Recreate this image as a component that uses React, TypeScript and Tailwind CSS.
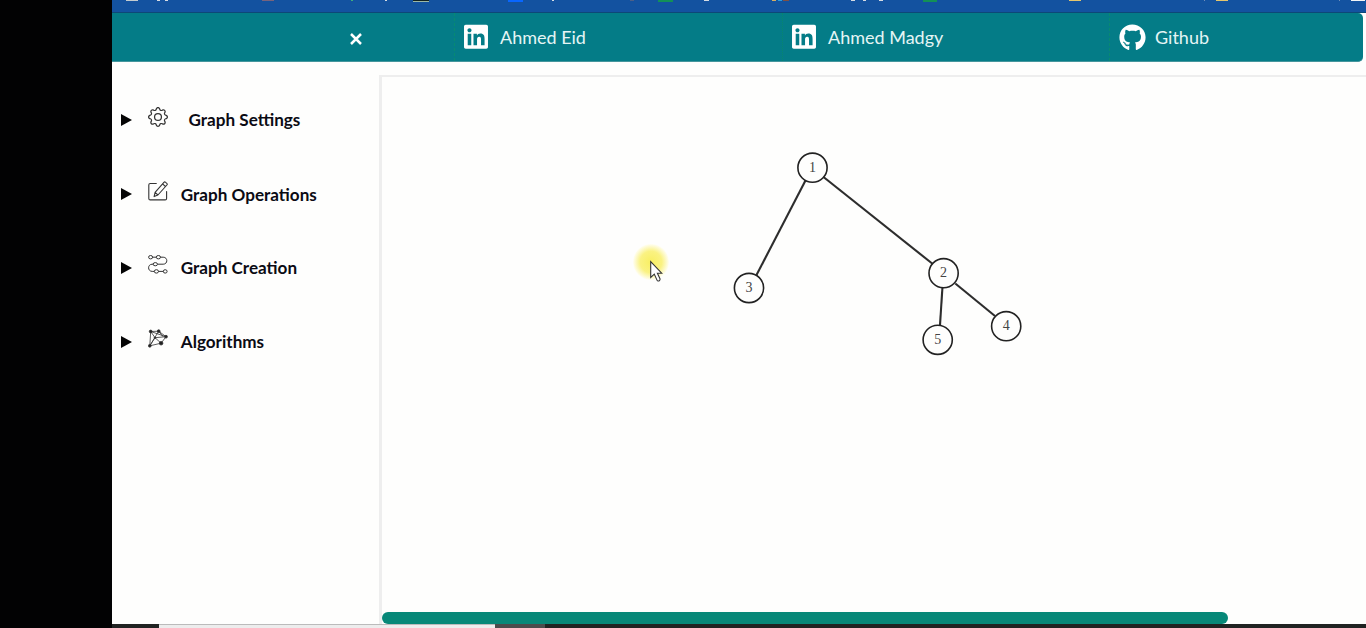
import type { ReactNode } from "react";
import { BsGear } from "react-icons/bs";
import { FaGithub, FaLinkedin } from "react-icons/fa";

const tabMarks = [
  { x: 14, w: 12, c: "#c3ccd0" },
  { x: 45, w: 3, c: "#d5dce4" },
  { x: 53, w: 3, c: "#d5dce4" },
  { x: 150, w: 12, c: "#77637d" },
  { x: 239, w: 2, c: "#3fae7c" },
  { x: 273, w: 2, c: "#d5dce4" },
  { x: 301, w: 16, c: "#10201f" },
  { x: 396, w: 15, c: "#0866ff" },
  { x: 440, w: 2, c: "#d5dce4" },
  { x: 518, w: 4, c: "#4c5f88" },
  { x: 546, w: 15, c: "#139057" },
  { x: 592, w: 5, c: "#d5dce4" },
  { x: 660, w: 4, c: "#d7ad62" },
  { x: 666, w: 4, c: "#289ee0" },
  { x: 671, w: 6, c: "#7d5046" },
  { x: 739, w: 4, c: "#d5dce4" },
  { x: 751, w: 3, c: "#d5dce4" },
  { x: 767, w: 4, c: "#d5dce4" },
  { x: 811, w: 14, c: "#139057" },
  { x: 957, w: 12, c: "#e5c66d" },
  { x: 1092, w: 1, c: "#718fba" },
  { x: 1104, w: 12, c: "#e5c66d" },
  { x: 1227, w: 1, c: "#718fba" },
  { x: 1239, w: 14, c: "#f2f4f6" },
];

function TabStrip() {
  return (
    <svg className="block h-[13px] w-full shrink-0 bg-[#1352a0]" viewBox="0 0 1254 13" shapeRendering="crispEdges">
      {tabMarks.map((m) => (
        <rect key={m.x} x={m.x} y="0" width={m.w} height="1" fill={m.c} />
      ))}
      <rect x="301" y="1" width="16" height="1" fill="#9ab8a6" />
      <rect x="396" y="1" width="15" height="1" fill="#0866ff" />
      <rect x="546" y="1" width="15" height="1" fill="#139057" />
      <rect x="811" y="1" width="14" height="1" fill="#139057" />
      <rect x="0" y="12" width="1254" height="1" fill="#0d4877" />
    </svg>
  );
}

function EditIcon() {
  return (
    <svg className="size-5" viewBox="0 0 20 20" fill="none" stroke="#333" strokeWidth="1.1" strokeLinejoin="round" strokeLinecap="round">
      <path d="M8.3 2.5H2.2Q.8 2.5.8 3.9v13.6q0 1.4 1.4 1.4h15q1.4 0 1.4-1.4v-7" />
      <path d="M15.9 1.3q.8-.8 1.7 0l1.2 1q.9.8.1 1.7l-9 10-3.8 1.6 1-4.2zM14.5 2.9l3 2.6M7.1 11.4l2.8 2.6" />
    </svg>
  );
}

function PathIcon() {
  return (
    <svg className="size-5" viewBox="0 0 20 20" fill="none" stroke="#333" strokeWidth="1">
      <path d="M4.5 2.2h3.7M12.4 2.2h2.8c4.8 0 4.8 7 0 7H9.7M5.4 9.2H4.2c-4.8 0-4.8 7.2 0 7.2h2.1M10.5 16.4h4.9" />
      <ellipse cx="2.6" cy="2.2" rx="2" ry="1.7" />
      <ellipse cx="10.4" cy="2.2" rx="2.1" ry="1.7" />
      <ellipse cx="7.3" cy="9.2" rx="2.2" ry="1.6" />
      <ellipse cx="8.4" cy="16.4" rx="2.1" ry="1.7" />
      <ellipse cx="17.2" cy="16.4" rx="1.9" ry="1.7" />
    </svg>
  );
}

function NetworkIcon() {
  return (
    <svg className="size-5" viewBox="0 0 20 20" fill="#222" stroke="#333" strokeWidth=".8">
      <path fill="none" d="M2.7 2.5 10.7 2.2 18 7.7 13.1 14.2 1.8 16.8 2.7 2.5 7 8.7 18 7.7 2.7 2.5M10.7 2.2 1.8 16.8 7 8.7 13.1 14.2M10.7 2.2 15 7.7" />
      <circle cx="2.7" cy="2.5" r="1.4" />
      <circle cx="10.7" cy="2.2" r="1.4" />
      <circle cx="18" cy="7.7" r="1.4" />
      <circle cx="13.1" cy="14.2" r="1.8" />
      <circle cx="1.8" cy="16.8" r="1.4" />
      <circle cx="7" cy="8.7" r=".8" />
    </svg>
  );
}

function MenuItem({ icon, label, className }: { icon: ReactNode; label: string; className: string }) {
  return (
    <div className="flex h-6 items-center">
      <svg className="h-3 w-[11px] shrink-0" viewBox="0 0 11 12">
        <path d="M0 0 11 6 0 12Z" fill="#050505" />
      </svg>
      <span className="-mt-[7px] ml-[16.4px] shrink-0">{icon}</span>
      <span className={`whitespace-nowrap text-[17.1px] leading-6 font-bold text-[#0b0b14] ${className}`}>{label}</span>
    </div>
  );
}

const nodes = [
  { id: 1, x: 812.5, y: 167.7 },
  { id: 2, x: 943.6, y: 273.2 },
  { id: 3, x: 749, y: 288 },
  { id: 4, x: 1006.2, y: 326.2 },
  { id: 5, x: 937.7, y: 339.8 },
];

const edges = [
  { from: 1, to: 3, d: "M805.5 180.5 756.5 275" },
  { from: 1, to: 2, d: "M823.8 177.2 932.5 263.8" },
  { from: 2, to: 5, d: "M942.4 288 940 325" },
  { from: 2, to: 4, d: "M955.3 283.5 995 316" },
];

function GraphCanvas() {
  return (
    <svg className="block h-[535px] w-full" viewBox="382 77 984 535">
      <defs>
        <radialGradient id="glow">
          <stop offset="0" stopColor="#f8ef62" />
          <stop offset=".6" stopColor="#faf282" />
          <stop offset="1" stopColor="#fffef4" />
        </radialGradient>
      </defs>
      {edges.map((e) => (
        <path key={`${e.from}-${e.to}`} d={e.d} stroke="#2d2d2d" strokeWidth="2.1" />
      ))}
      {nodes.map((n) => (
        <g key={n.id}>
          <circle cx={n.x} cy={n.y} r="14.6" fill="#fefefd" stroke="#222" strokeWidth="1.6" />
          <text x={n.x} y={n.y + 3.8} textAnchor="middle" fontSize="14" fill="#444" className="font-['Liberation_Serif',serif]">{n.id}</text>
        </g>
      ))}
      <circle cx="651" cy="262" r="18" fill="url(#glow)" />
      <path d="M650.7 261.7v15.7l3.6-3.3 2.7 6q.5 1.3 2 .8 1.5-.8 1-2.1l-2.6-5.6h4.3z" fill="#fff" stroke="#343434" strokeWidth="1.1" />
    </svg>
  );
}

export default function App() {
  return (
    <div className="flex h-[628px] w-[1366px] overflow-hidden bg-[#fefefd] font-['Lato',sans-serif]">
      <div className="w-28 shrink-0 bg-[#020203]" />
      <div className="flex w-[1254px] flex-col">
        <TabStrip />
        <header className="flex h-[49px] w-[1251px] items-center rounded-r-[5px] border-b border-[#45969d] bg-[#047c87] text-[18px] leading-6 text-[#e5f5f5]">
          <div className="flex h-full w-[343px] items-center border-r border-dashed border-r-[#078a72] pl-[238px]">
            <svg className="mt-1 size-3" viewBox="0 0 12 12" stroke="#fff" strokeWidth="2.5">
              <path d="M1 1 11 11M11 1 1 11" />
            </svg>
          </div>
          <a className="flex h-full w-[328px] items-center border-r border-dotted border-r-[#07866f] pl-[9px]">
            <FaLinkedin className="h-[27.4px] w-6 text-white" />
            <span className="ml-3 whitespace-nowrap">Ahmed Eid</span>
          </a>
          <a className="flex h-full w-[327px] items-center border-r border-dashed border-r-[#078a72] pl-[9px]">
            <FaLinkedin className="h-[27.4px] w-6 text-white" />
            <span className="ml-3 whitespace-nowrap">Ahmed Madgy</span>
          </a>
          <a className="flex items-center pl-[9px]">
            <FaGithub className="size-[27px] text-white" />
            <span className="ml-[9px] whitespace-nowrap">Github</span>
          </a>
        </header>
        <div className="flex h-[562px]">
          <aside className="flex w-[267px] shrink-0 flex-col gap-[50px] pt-[46px] pl-[9px]">
            <MenuItem icon={<BsGear className="size-5 text-[#333]" />} label="Graph Settings" className="ml-[20.2px]" />
            <MenuItem icon={<EditIcon />} label="Graph Operations" className="ml-[12.4px] pt-px" />
            <MenuItem icon={<PathIcon />} label="Graph Creation" className="ml-[12.4px]" />
            <MenuItem icon={<NetworkIcon />} label="Algorithms" className="ml-[12.4px]" />
          </aside>
          <main className="mt-[13px] min-w-0 flex-1 border-t-2 border-l-[3px] border-[#eeeeee]">
            <GraphCanvas />
            <div className="h-3 w-[846px] rounded-full bg-[#078878]" />
          </main>
        </div>
        <footer className="flex h-1 bg-[#202322]">
          <div className="w-[47px]" />
          <div className="w-[336px] border-t border-[#bbb] bg-[#ededed]" />
          <div className="w-[50px] bg-[#4b4c4c]" />
        </footer>
      </div>
    </div>
  );
}
